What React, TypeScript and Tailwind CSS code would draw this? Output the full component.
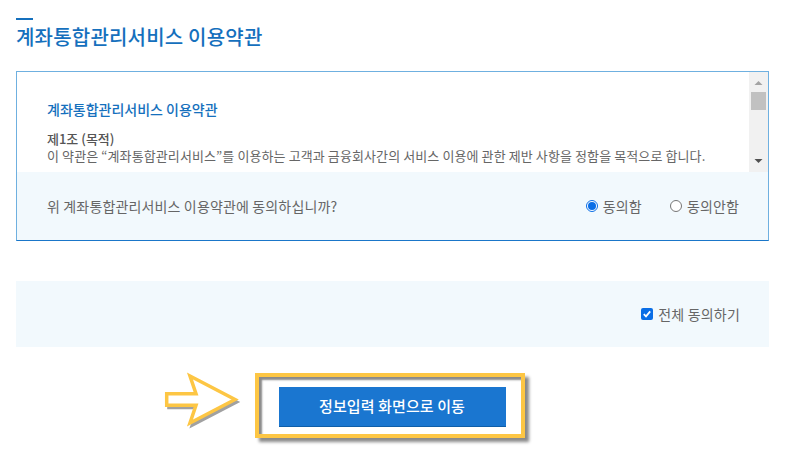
const font = "font-['Noto_Sans_CJK_KR','Noto_Sans',sans-serif]"

function Radio({ checked, label }: { checked?: boolean; label: string }) {
  return (
    <label className="flex items-center gap-[5px]">
      <span
        className={`flex h-[12px] w-[12px] items-center justify-center rounded-full border bg-white ${
          checked ? 'border-[#0a6ee6]' : 'border-[#767676]'
        }`}
      >
        {checked && <span className="h-[8px] w-[8px] rounded-full bg-[#0a6ee6]" />}
      </span>
      <span>{label}</span>
    </label>
  )
}

function Scrollbar() {
  return (
    <div className="flex w-[19px] shrink-0 flex-col items-center bg-[#f1f1f1]">
      <svg width="19" height="20" viewBox="0 0 19 20" className="shrink-0">
        <path d="M5.500 13 9.500 9l4 4z" fill="#a3a3a3" />
      </svg>
      <div className="h-[18px] w-[15px] bg-[#c1c1c1]" />
      <div className="flex-1" />
      <svg width="19" height="20" viewBox="0 0 19 20" className="shrink-0">
        <path d="M5.500 7 9.500 11l4-4z" fill="#505050" />
      </svg>
    </div>
  )
}

function Arrow() {
  return (
    <svg width="82" height="65" viewBox="0 0 82 65" className="shrink-0 overflow-visible">
      <path
        d="M3.700 20.700H33L27 3l45 23.500L27 50l6-17.700H3.700z"
        fill="#8a8a8a"
        opacity="0.8"
        stroke="#8a8a8a"
        strokeWidth="3"
        transform="translate(2 2.500)"
      />
      <path
        d="M3.700 20.700H33L27 3l45 23.500L27 50l6-17.700H3.700z"
        fill="#fff"
        stroke="#fdc644"
        strokeWidth="3.500"
      />
    </svg>
  )
}

export default function App() {
  return (
    <div className={`h-[450px] w-[800px] overflow-hidden bg-white pl-[16px] pt-[18px] ${font}`}>
      <div className="h-[2px] w-[17px] bg-[#1570bd]" />
      <h1 className="mt-[2px] text-[20px] leading-[30px] font-medium tracking-[0.2px] text-[#1570bd]">
        계좌통합관리서비스 이용약관
      </h1>

      <section className="mt-[19px] w-[753px] border border-[#6fb0e0] border-b-[#1a76c9]">
        <div className="flex h-[100px]">
          <div className="flex-1 overflow-hidden pl-[30px] pt-[27px]">
            <p className="text-[14px] leading-[20px] font-medium text-[#1570bd]">
              계좌통합관리서비스 이용약관
            </p>
            <p className="mt-[11px] text-[13px] leading-[17px] font-medium text-[#555]">제1조 (목적)</p>
            <p className="text-[13px] leading-[17px] tracking-[0.1px] whitespace-nowrap text-[#666]">
              이 약관은 “계좌통합관리서비스”를 이용하는 고객과 금융회사간의 서비스 이용에 관한 제반 사항을 정함을 목적으로 합니다.
            </p>
          </div>
          <Scrollbar />
        </div>
        <div className="flex h-[68px] items-center justify-between bg-[#f2f9fd] pl-[30px] pr-[29px] text-[14px] tracking-[0.15px] text-[#666]">
          <span>위 계좌통합관리서비스 이용약관에 동의하십니까?</span>
          <div className="flex gap-[28px] text-[14px]">
            <Radio checked label="동의함" />
            <Radio label="동의안함" />
          </div>
        </div>
      </section>

      <div className="mt-[40px] flex h-[66px] w-[753px] items-center justify-end gap-[5px] bg-[#f2f9fd] pr-[29px] text-[14px] tracking-[0.2px] text-[#666]">
        <span className="flex h-[12px] w-[12px] items-center justify-center rounded-[2px] bg-[#0a6ee6]">
          <svg width="10" height="10" viewBox="0 0 10 10">
            <path d="M1.800 5.200 4 7.400l4.200-5" fill="none" stroke="#fff" strokeWidth="1.800" />
          </svg>
        </span>
        <span>전체 동의하기</span>
      </div>

      <div className="mt-[26px] ml-[147px] flex items-start gap-[10px]">
        <Arrow />
        <div className="flex h-[65px] w-[270px] items-center justify-center border-[4px] border-[#fdc644] bg-white pt-[3px] pl-[4px] shadow-[inset_3px_3px_2px_#8a8a8a,4px_4px_3px_#8a8a8a]">
          <button
            type="button"
            className="h-[40px] w-[227px] border-b border-[#0f5ea8] bg-[#1a76d0] text-[15px] font-medium tracking-[0.1px] text-white"
          >
            정보입력 화면으로 이동
          </button>
        </div>
      </div>
    </div>
  )
}
